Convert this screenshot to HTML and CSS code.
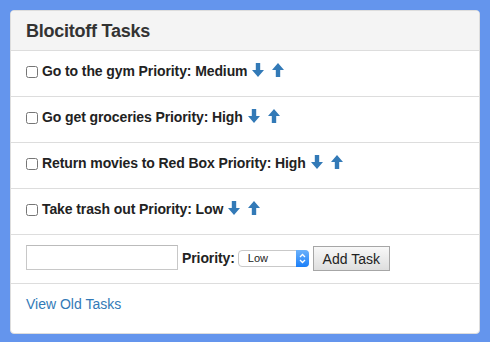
FILE: index.html
```html
<!DOCTYPE html>
<html>
<head>
<meta charset="utf-8">
<link rel="stylesheet" href="styles.css">
</head>
<body>
<div class="panel">
  <div class="panel-heading">Blocitoff Tasks</div>
  <ul class="tasks">
    <li class="task">
      <input type="checkbox" class="check">
      <span class="label">Go to the gym Priority: Medium</span>
      <span class="arrows">
        <svg class="arrow" width="12" height="14" viewBox="0 0 12 14"><path d="M3.8 0H8.2V7H12L6 14L0 7H3.8Z" fill="#337ab7"/></svg>
        <svg class="arrow" width="12" height="14" viewBox="0 0 12 14"><path d="M3.8 14H8.2V7H12L6 0L0 7H3.8Z" fill="#337ab7"/></svg>
      </span>
    </li>
    <li class="task">
      <input type="checkbox" class="check">
      <span class="label">Go get groceries Priority: High</span>
      <span class="arrows">
        <svg class="arrow" width="12" height="14" viewBox="0 0 12 14"><path d="M3.8 0H8.2V7H12L6 14L0 7H3.8Z" fill="#337ab7"/></svg>
        <svg class="arrow" width="12" height="14" viewBox="0 0 12 14"><path d="M3.8 14H8.2V7H12L6 0L0 7H3.8Z" fill="#337ab7"/></svg>
      </span>
    </li>
    <li class="task">
      <input type="checkbox" class="check">
      <span class="label">Return movies to Red Box Priority: High</span>
      <span class="arrows">
        <svg class="arrow" width="12" height="14" viewBox="0 0 12 14"><path d="M3.8 0H8.2V7H12L6 14L0 7H3.8Z" fill="#337ab7"/></svg>
        <svg class="arrow" width="12" height="14" viewBox="0 0 12 14"><path d="M3.8 14H8.2V7H12L6 0L0 7H3.8Z" fill="#337ab7"/></svg>
      </span>
    </li>
    <li class="task">
      <input type="checkbox" class="check">
      <span class="label">Take trash out Priority: Low</span>
      <span class="arrows">
        <svg class="arrow" width="12" height="14" viewBox="0 0 12 14"><path d="M3.8 0H8.2V7H12L6 14L0 7H3.8Z" fill="#337ab7"/></svg>
        <svg class="arrow" width="12" height="14" viewBox="0 0 12 14"><path d="M3.8 14H8.2V7H12L6 0L0 7H3.8Z" fill="#337ab7"/></svg>
      </span>
    </li>
  </ul>
  <form class="new-task">
    <input type="text" class="text-input">
    <span class="label priority-label">Priority:</span>
    <span class="select-wrap">
      <select class="select">
        <option>Low</option>
        <option>Medium</option>
        <option>High</option>
      </select>
      <span class="stepper">
        <svg width="7" height="11" viewBox="0 0 7 11"><path d="M1 4L3.5 1.5L6 4M1 7L3.5 9.5L6 7" fill="none" stroke="#fff" stroke-width="1.3"/></svg>
      </span>
    </span>
    <button type="button" class="btn">Add Task</button>
  </form>
  <div class="panel-footer">
    <a href="#" class="link">View Old Tasks</a>
  </div>
</div>
</body>
</html>
```

FILE: styles.css
```css
html, body {
  margin: 0;
  padding: 0;
}
body {
  background: #6495ed;
  font-family: "Liberation Sans", Arial, sans-serif;
  font-size: 14px;
  line-height: 20px;
  color: #333;
  padding: 10px 10px 8px 10px;
  height: 342px;
  box-sizing: border-box;
}
.panel {
  width: 470px;
  height: 324px;
  box-sizing: border-box;
  background: #fff;
  border: 1px solid #ddd;
  border-radius: 4px;
  overflow: hidden;
  display: flex;
  flex-direction: column;
}
.panel-heading {
  height: 40px;
  box-sizing: border-box;
  background: #f4f4f4;
  border-bottom: 1px solid #ddd;
  padding: 0 15px;
  display: flex;
  align-items: center;
  font-size: 18px;
  font-weight: bold;
  letter-spacing: -0.25px;
  color: #333;
}
.tasks {
  list-style: none;
  margin: 0;
  padding: 0;
}
.task {
  height: 46px;
  box-sizing: border-box;
  border-bottom: 1px solid #ddd;
  padding: 10px 15px 0 15px;
  display: flex;
  align-items: flex-start;
}
.check {
  width: 12px;
  height: 12px;
  margin: 5px 4px 0 0;
  flex: none;
}
.label {
  font-weight: bold;
  color: #222;
  letter-spacing: -0.1px;
}
.arrows {
  display: flex;
  gap: 8px;
  margin-left: 5px;
  padding-top: 2px;
}
.arrow {
  display: block;
}
.new-task {
  height: 49px;
  box-sizing: border-box;
  border-bottom: 1px solid #ddd;
  padding: 10px 15px 0 15px;
  margin: 0;
  display: flex;
  align-items: flex-start;
}
.text-input {
  width: 152px;
  height: 25px;
  box-sizing: border-box;
  border: 1px solid #c8c8c8;
  border-top-color: #bbb;
  margin: 0;
  padding: 2px 4px;
  font-family: inherit;
  font-size: 14px;
}
.priority-label {
  margin: 3px 0 0 4px;
}
.select-wrap {
  position: relative;
  width: 71px;
  height: 17px;
  margin: 5px 0 0 3px;
}
.select {
  -webkit-appearance: none;
  appearance: none;
  width: 71px;
  height: 17px;
  box-sizing: border-box;
  border: 1px solid #c9c9c9;
  border-radius: 4px;
  background: #fff;
  margin: 0;
  padding: 0 0 0 9px;
  font-family: "Liberation Sans", Arial, sans-serif;
  font-size: 11px;
  line-height: 15px;
  color: #222;
  display: block;
}
.stepper {
  position: absolute;
  top: 0;
  right: 0;
  width: 13px;
  height: 17px;
  border-radius: 0 4px 4px 0;
  background: linear-gradient(#6cb2fb, #1b7ff9);
  display: flex;
  align-items: center;
  justify-content: center;
  pointer-events: none;
}
.stepper svg {
  display: block;
}
.btn {
  width: 77px;
  height: 25px;
  box-sizing: border-box;
  margin: 1px 0 0 4px;
  border: 1px solid #a6a6a6;
  background: linear-gradient(#f8f8f8, #dedede);
  font-family: "Liberation Sans", Arial, sans-serif;
  font-size: 14px;
  color: #222;
  padding: 0;
}
.panel-footer {
  padding: 10px 15px 0 15px;
}
.link {
  color: #337ab7;
  text-decoration: none;
}
```
